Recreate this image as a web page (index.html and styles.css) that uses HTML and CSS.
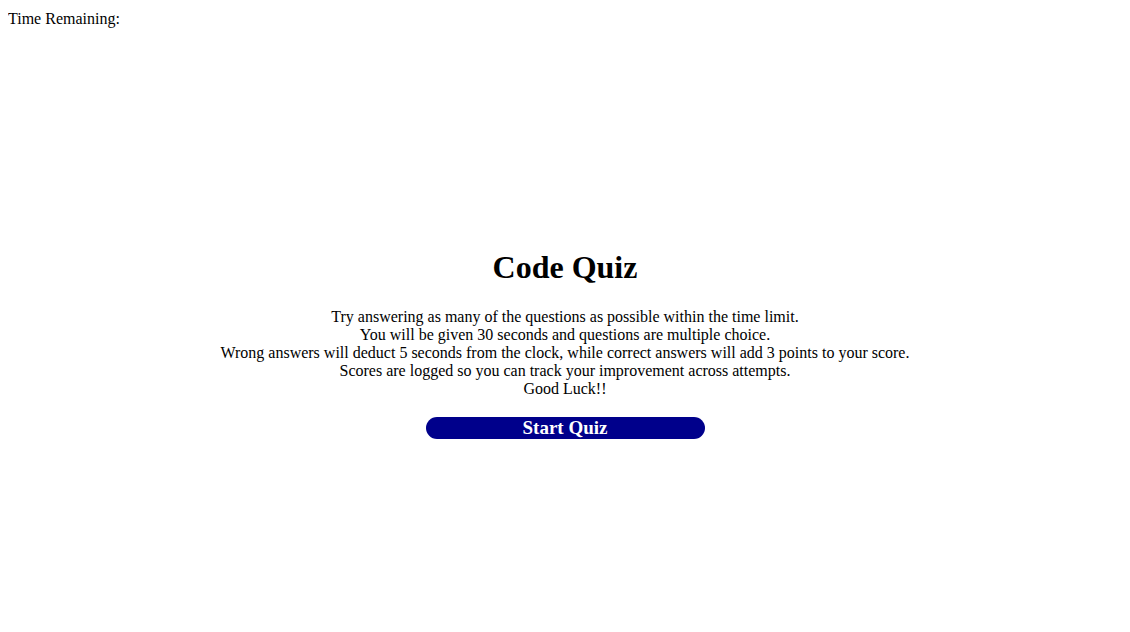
FILE: index.html
```html
<!DOCTYPE html>
<html>
<head>
<meta charset="utf-8">
<title>Code Quiz</title>
<link rel="stylesheet" href="styles.css">
</head>
<body>
<header class="timer">Time Remaining: <span class="time"></span></header>
<main class="intro">
  <h1 class="title">Code Quiz</h1>
  <p class="rules">Try answering as many of the questions as possible within the time limit.<br>You will be given 30 seconds and questions are multiple choice.<br>Wrong answers will deduct 5 seconds from the clock, while correct answers will add 3 points to your score.<br>Scores are logged so you can track your improvement across attempts.<br>Good Luck!!</p>
  <button class="start-btn">Start Quiz</button>
</main>
</body>
</html>
```
FILE: styles.css
```css
html, body {
  background: #ffffff;
}
body {
  margin: 8px;
  font-family: "Liberation Serif", "Times New Roman", serif;
  font-size: 16px;
  color: #000000;
}
.timer {
  line-height: 22px;
}
.intro {
  display: flex;
  flex-direction: column;
  align-items: center;
  text-align: center;
  padding-top: 198px;
}
.title {
  font-size: 32px;
  font-weight: bold;
  margin: 21px 0 22px;
  line-height: 37px;
}
.rules {
  margin: 0;
  line-height: 18px;
}
.start-btn {
  margin-top: 19px;
  width: 279px;
  height: 22px;
  padding: 0;
  border: none;
  border-radius: 11px;
  background: #00008b;
  color: #ffffff;
  font-family: "Liberation Serif", "Times New Roman", serif;
  font-weight: bold;
  font-size: 19px;
  line-height: 22px;
  cursor: pointer;
}
```
